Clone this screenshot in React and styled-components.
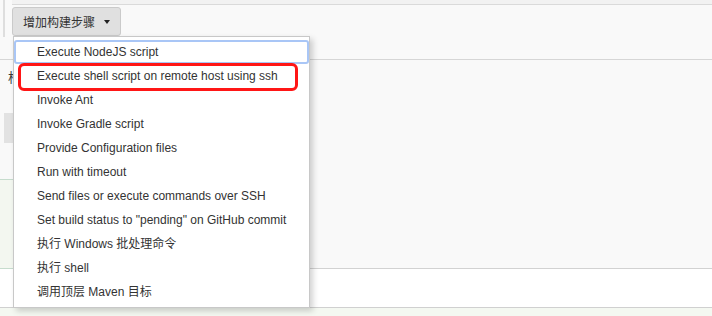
import React from "react";
import styled, { createGlobalStyle } from "styled-components";

const GlobalStyle = createGlobalStyle`
  html, body {
    margin: 0;
    padding: 0;
    background: #f9f9f9;
  }
  body {
    font-family: "Liberation Sans", Arial, "Noto Sans CJK SC", sans-serif;
    color: #333;
  }
`;

const steps = [
  "Execute NodeJS script",
  "Execute shell script on remote host using ssh",
  "Invoke Ant",
  "Invoke Gradle script",
  "Provide Configuration files",
  "Run with timeout",
  "Send files or execute commands over SSH",
  'Set build status to "pending" on GitHub commit',
  "执行 Windows 批处理命令",
  "执行 shell",
  "调用顶层 Maven 目标",
];

const Page = styled.div`
  position: relative;
  width: 712px;
  height: 316px;
  overflow: hidden;
  display: flex;
  flex-direction: column;
  background: #f9f9f9;
`;

const Row = styled.div`
  display: flex;
  flex: ${({ grow }) => (grow ? 1 : "none")};
  height: ${({ h }) => (h ? `${h}px` : "auto")};
  background: ${({ bg }) => bg || "transparent"};
  border-bottom: ${({ line }) => (line ? `1px solid ${line}` : "none")};
`;

const Rail = styled.div`
  width: 12px;
  flex: none;
  padding-left: 3px;
  box-sizing: border-box;
`;

const RailLine = styled.div`
  width: 2px;
  height: 37px;
  background: #dedede;
`;

const Content = styled.div`
  flex: 1;
  display: flex;
  flex-direction: column;
`;

const TopStrip = styled.div`
  height: 4px;
  background: #f2f2f2;
  border-bottom: 1px solid #dadada;
`;

const AddButton = styled.button`
  margin-top: 2px;
  width: 109px;
  height: 29px;
  display: flex;
  align-items: center;
  gap: 9px;
  padding: 0 0 0 10px;
  background: #e0e0e0;
  border: 1px solid #cacaca;
  border-radius: 3px;
  font-family: "Liberation Sans", "Noto Sans CJK SC", sans-serif;
  font-size: 12px;
  color: #333;
  cursor: pointer;
`;

const Caret = styled.span`
  width: 0;
  height: 0;
  border-left: 3.5px solid transparent;
  border-right: 3.5px solid transparent;
  border-top: 4px solid #222;
`;

const Aside = styled.div`
  width: 13px;
  flex: none;
  display: flex;
  flex-direction: column;
  overflow: hidden;
`;

const AsideTop = styled.div`
  height: 120px;
  padding: 9px 0 0 8px;
  box-sizing: border-box;
  border-bottom: 1px solid #c6dccd;
`;

const SectionLabel = styled.div`
  font-size: 13px;
  line-height: 16px;
  white-space: nowrap;
  color: #3a3a3a;
  font-family: "Noto Sans CJK SC", sans-serif;
`;

const GhostButton = styled.div`
  margin: 28px 0 0 -4px;
  width: 30px;
  height: 30px;
  background: #e2e2e2;
`;

const AsidePanel = styled.div`
  flex: 1;
  background: #f3f7f0;
  border-bottom: 1px solid #c6dccd;
`;

const Main = styled.div`
  flex: 1;
  border-bottom: 1px solid #d2d2d2;
`;

const Menu = styled.ul`
  position: absolute;
  left: 13px;
  top: 36px;
  width: 297px;
  box-sizing: border-box;
  margin: 0;
  padding: 3px 0 3px;
  list-style: none;
  background: #fff;
  border: 1px solid #c8c8c8;
  box-shadow: 3px 3px 6px rgba(0, 0, 0, 0.18);
  z-index: 5;
`;

const Item = styled.li`
  height: 24px;
  line-height: 24px;
  padding-left: 23px;
  font-size: 12px;
  color: #333;
  white-space: nowrap;
  border-radius: 3px;
  outline: ${({ focused }) => (focused ? "2px solid #a9c6f6" : "none")};
  outline-offset: -2px;
`;

const Highlight = styled.div`
  position: absolute;
  left: 4px;
  top: 26px;
  width: 280px;
  height: 28px;
  box-sizing: border-box;
  border: 3px solid #ff1616;
  border-radius: 6px;
  pointer-events: none;
`;

export default function App() {
  return (
    <>
      <GlobalStyle />
      <Page>
        <Row h={59} line="#d6d6d6">
          <Rail>
            <RailLine />
          </Rail>
          <Content>
            <TopStrip />
            <AddButton>
              增加构建步骤
              <Caret />
            </AddButton>
          </Content>
        </Row>
        <Row h={209}>
          <Aside>
            <AsideTop>
              <SectionLabel>构建后操作</SectionLabel>
              <GhostButton />
            </AsideTop>
            <AsidePanel />
          </Aside>
          <Main />
        </Row>
        <Row h={38} bg="#fff" line="#d0d0d0" />
        <Row grow bg="#f4f8f1" />
        <Menu>
          {steps.map((step, i) => (
            <Item key={step} focused={i === 0}>
              {step}
            </Item>
          ))}
          <Highlight />
        </Menu>
      </Page>
    </>
  );
}
